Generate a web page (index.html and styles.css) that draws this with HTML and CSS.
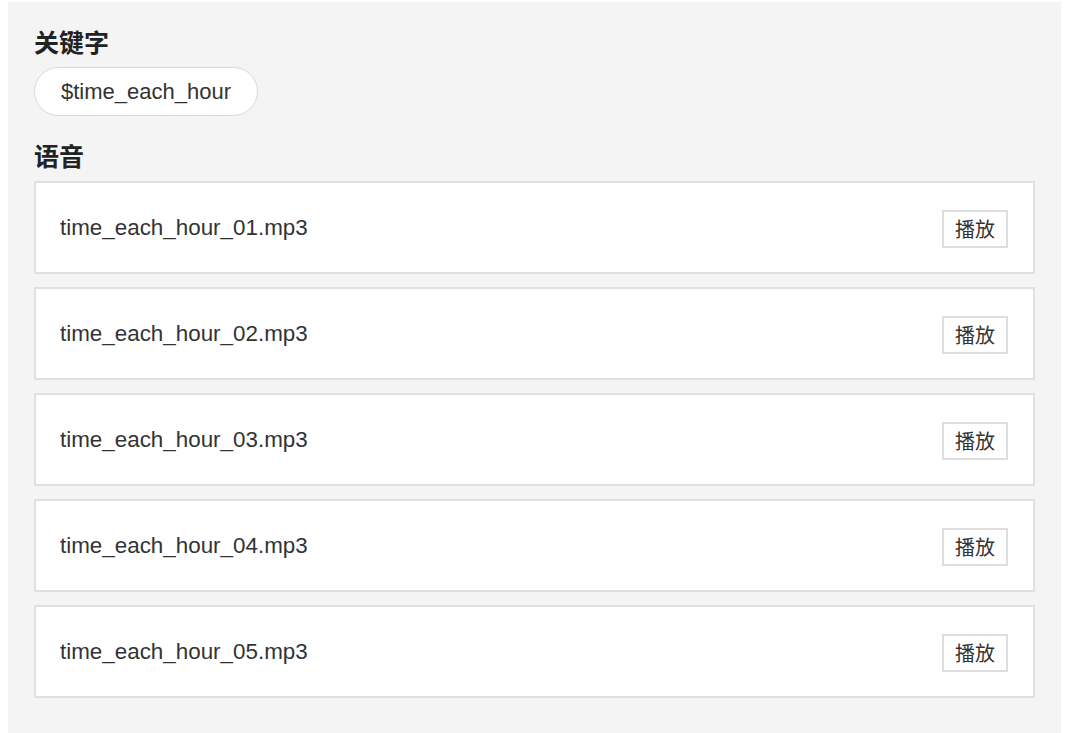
FILE: index.html
```html
<!DOCTYPE html>
<html lang="zh-CN">
<head>
<meta charset="utf-8">
<title>关键字</title>
<link rel="stylesheet" href="styles.css">
</head>
<body>
<div class="panel">
  <h3 class="label">关键字</h3>
  <div class="tags">
    <span class="pill">$time_each_hour</span>
  </div>
  <h3 class="label label-voice">语音</h3>
  <div class="list">
    <div class="card"><span class="name">time_each_hour_01.mp3</span><button class="play">播放</button></div>
    <div class="card"><span class="name">time_each_hour_02.mp3</span><button class="play">播放</button></div>
    <div class="card"><span class="name">time_each_hour_03.mp3</span><button class="play">播放</button></div>
    <div class="card"><span class="name">time_each_hour_04.mp3</span><button class="play">播放</button></div>
    <div class="card"><span class="name">time_each_hour_05.mp3</span><button class="play">播放</button></div>
  </div>
</div>
</body>
</html>
```

FILE: styles.css
```css
html, body {
  margin: 0;
  padding: 0;
  background: #ffffff;
}

body {
  font-family: "Liberation Sans", "Noto Sans CJK SC", sans-serif;
  color: #333333;
}

.panel {
  margin: 2px 19px 0 8px;
  padding: 24px 26px 36px 26px;
  background: #f4f4f4;
}

.label {
  margin: 0;
  font-family: "Noto Sans CJK SC", sans-serif;
  font-size: 25px;
  line-height: 30px;
  font-weight: 700;
  color: #222222;
}

.label-voice {
  margin-top: 24px;
}

.tags {
  display: flex;
  margin-top: 11px;
}

.pill {
  display: inline-block;
  padding: 12px 26px;
  border: 1px solid #d8d8d8;
  border-radius: 25px;
  background: #ffffff;
  font-size: 22px;
  line-height: 23px;
  color: #333333;
}

.list {
  display: flex;
  flex-direction: column;
  gap: 14px;
  margin-top: 11px;
}

.card {
  display: flex;
  align-items: center;
  justify-content: space-between;
  height: 93px;
  box-sizing: border-box;
  padding: 0 25px 0 24px;
  border: 2px solid #e0e0e0;
  background: #ffffff;
}

.list .card + .card {
  margin-top: -1px;
}

.name {
  font-size: 22.4px;
  line-height: 26px;
  color: #333333;
}

.play {
  height: 38px;
  padding: 0 11px;
  margin-top: 2px;
  border: 2px solid #dedede;
  background: #ffffff;
  font-family: "Noto Sans CJK SC", sans-serif;
  font-size: 20px;
  line-height: 32px;
  color: #333333;
  border-radius: 0;
}
```
